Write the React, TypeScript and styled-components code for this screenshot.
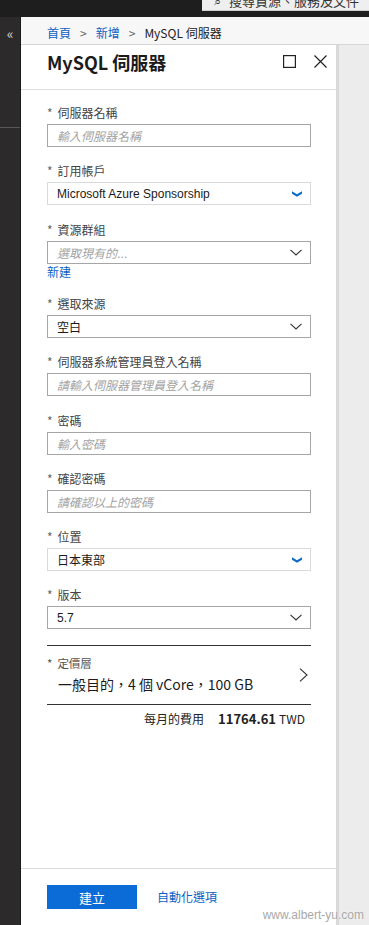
import React from 'react'
import styled, { createGlobalStyle } from 'styled-components'

const GlobalStyle = createGlobalStyle`
  html, body {
    margin: 0;
    padding: 0;
    background: #1e1e1e;
  }
  body {
    font-family: 'Noto Sans CJK TC', 'Liberation Sans', sans-serif;
    color: #222;
  }
`

const Page = styled.div`
  position: relative;
  width: 369px;
  height: 925px;
  display: flex;
  flex-direction: column;
  overflow: hidden;
`

const TopBar = styled.div`
  height: 17px;
  flex: 0 0 17px;
  background: #1e1e1e;
  display: flex;
  justify-content: flex-end;
  align-items: flex-start;
`

const SearchBox = styled.div`
  width: 155px;
  height: 10px;
  background: #efefef;
  border-bottom: 1px solid #cfcfcf;
  overflow: hidden;
  display: flex;
  gap: 8px;
  padding-left: 12px;
  font-size: 13px;
  line-height: 13px;
  color: #333;
  white-space: nowrap;
  span {
    margin-top: -6px;
  }
`

const Main = styled.div`
  flex: 1;
  display: flex;
  min-height: 0;
`

const SideNav = styled.div`
  width: 21px;
  flex: 0 0 21px;
  background: #2c2a2a;
  border-right: 1px solid #1a1a1a;
  box-sizing: border-box;
  display: flex;
  flex-direction: column;
`

const Collapse = styled.div`
  height: 30px;
  display: flex;
  align-items: center;
  justify-content: center;
  color: #d8d8d8;
  font-size: 14px;
  line-height: 14px;
  padding-top: 1px;
`

const NavRule = styled.div`
  margin-top: 79px;
  height: 1px;
  background: #595757;
`

const Workspace = styled.div`
  flex: 1;
  display: flex;
  flex-direction: column;
  min-width: 0;
`

const Breadcrumb = styled.div`
  height: 28px;
  flex: 0 0 28px;
  box-sizing: border-box;
  background: #f7f7f7;
  border-bottom: 1px solid #d6d6d6;
  padding: 0 0 3px 26px;
  display: flex;
  align-items: flex-end;
  gap: 9px;
  font-size: 12px;
  line-height: 16px;
`

const Crumb = styled.span<{ $link?: boolean }>`
  color: ${({ $link }) => ($link ? '#0b62c4' : '#222')};
`

const Sep = styled.span`
  color: #666;
  font-size: 12px;
`

const BladeArea = styled.div`
  flex: 1;
  display: flex;
  background: #ececec;
  min-height: 0;
`

const Blade = styled.div`
  width: 315px;
  flex: 0 0 315px;
  background: #fff;
  display: flex;
  flex-direction: column;
`

const Gutter = styled.div`
  width: 3px;
  background: #d9d9d9;
`

const BladeHeader = styled.div`
  height: 45px;
  flex: 0 0 45px;
  box-sizing: border-box;
  border-bottom: 1px solid #dedede;
  padding: 5px 9px 0 26px;
  display: flex;
  align-items: flex-start;
`

const Title = styled.h1`
  flex: 1;
  margin: 0;
  font-size: 18px;
  line-height: 24px;
  font-weight: 700;
  color: #1b1b1b;
`

const HeaderIcons = styled.div`
  display: flex;
  gap: 18px;
  padding-top: 5px;
`

const Body = styled.div`
  flex: 1;
  padding: 14px 25px 0 26px;
  display: flex;
  flex-direction: column;
`

const Field = styled.div<{ $tight?: boolean }>`
  display: flex;
  flex-direction: column;
  margin-bottom: ${({ $tight }) => ($tight ? '0' : '15.25px')};
`

const Label = styled.label`
  font-size: 12px;
  line-height: 17px;
  color: #444;
  margin-bottom: 3px;
  b {
    font-weight: 400;
    color: #666;
    margin-right: 5px;
  }
`

const TextInput = styled.input`
  height: 23px;
  box-sizing: border-box;
  border: 1px solid #a6a6a6;
  border-radius: 0;
  padding: 0 9px;
  font-family: inherit;
  font-size: 12px;
  color: #222;
  outline: none;
  &::placeholder {
    color: #a3a3a3;
    font-style: italic;
  }
`

const Select = styled.div<{ $light?: boolean }>`
  height: 23px;
  box-sizing: border-box;
  border: 1px solid ${({ $light }) => ($light ? '#dadada' : '#a6a6a6')};
  padding: 0 8px 0 9px;
  display: flex;
  align-items: center;
  justify-content: space-between;
  font-family: 'Liberation Sans', 'Noto Sans CJK TC', sans-serif;
  font-size: 12px;
  color: #1b1b1b;
`

const Placeholder = styled.span`
  font-family: 'Noto Sans CJK TC', sans-serif;
  color: #a3a3a3;
  font-style: italic;
  font-size: 12px;
`

const NewLink = styled.a`
  color: #0b62c4;
  font-size: 12px;
  line-height: 16px;
  margin-bottom: 15.5px;
  text-decoration: none;
  cursor: pointer;
`

const Divider = styled.div`
  height: 1px;
  background: #333;
`

const Pricing = styled.div`
  padding: 10px 3px 10px 0;
  display: flex;
  align-items: center;
`

const PricingText = styled.div`
  flex: 1;
  display: flex;
  flex-direction: column;
  gap: 4px;
`

const SmallLabel = styled.div`
  font-size: 11.5px;
  line-height: 14px;
  color: #555;
  b {
    font-weight: 400;
    margin-right: 5px;
  }
`

const PricingValue = styled.div`
  margin-left: 11px;
  font-size: 14px;
  line-height: 20px;
  color: #1b1b1b;
`

const CostRow = styled.div`
  padding: 6px 6px 0 0;
  display: flex;
  justify-content: flex-end;
  align-items: baseline;
  font-size: 12px;
  line-height: 16px;
  color: #222;
`

const CostAmount = styled.strong`
  margin-left: 14px;
  margin-right: 3px;
  font-size: 13px;
  font-weight: 700;
`

const Footer = styled.div`
  height: 57px;
  flex: 0 0 57px;
  box-sizing: border-box;
  border-top: 1px solid #dcdcdc;
  padding: 16px 0 0 26px;
  display: flex;
  align-items: flex-start;
  gap: 20px;
`

const PrimaryButton = styled.button`
  width: 90px;
  height: 24px;
  border: none;
  background: #0b6cd8;
  color: #fff;
  font-family: inherit;
  font-size: 13px;
  cursor: pointer;
`

const FooterLink = styled.a`
  color: #0b62c4;
  font-size: 12px;
  line-height: 24px;
  text-decoration: none;
`

const Watermark = styled.div`
  position: absolute;
  right: 5px;
  bottom: 3px;
  font-family: 'Liberation Sans', sans-serif;
  font-size: 12px;
  color: #a9a9a9;
  text-shadow: 0 0 2px #fff;
`

const ChevronDown = ({ blue }: { blue?: boolean }) =>
  blue ? (
    <svg width="10" height="6" viewBox="0 0 10 6">
      <path d="M0 0.3 L5 3.3 L10 0.3 L10 2.8 L5 5.8 L0 2.8 Z" fill="#0b6cc7" />
    </svg>
  ) : (
    <svg width="12" height="7" viewBox="0 0 12 7">
      <path d="M0.5 0.8 L6 6 L11.5 0.8" fill="none" stroke="#333" strokeWidth="1.1" />
    </svg>
  )

const ChevronRight = () => (
  <svg width="9" height="14" viewBox="0 0 9 14">
    <path d="M1 0.6 L8 7 L1 13.4" fill="none" stroke="#333" strokeWidth="1.1" />
  </svg>
)

const MaximizeIcon = () => (
  <svg width="13" height="13" viewBox="0 0 13 13">
    <rect x="0.6" y="0.6" width="11.8" height="11.8" fill="none" stroke="#222" strokeWidth="1.2" />
  </svg>
)

const CloseIcon = () => (
  <svg width="13" height="13" viewBox="0 0 13 13">
    <path d="M0.5 0.5 L12.5 12.5 M12.5 0.5 L0.5 12.5" stroke="#222" strokeWidth="1.2" />
  </svg>
)

const textFields = {
  serverName: { label: '伺服器名稱', placeholder: '輸入伺服器名稱' },
  admin: { label: '伺服器系統管理員登入名稱', placeholder: '請輸入伺服器管理員登入名稱' },
  password: { label: '密碼', placeholder: '輸入密碼' },
  confirm: { label: '確認密碼', placeholder: '請確認以上的密碼' },
}

const Req = ({ children }: { children: React.ReactNode }) => (
  <Label>
    <b>*</b>
    {children}
  </Label>
)

const InputField = ({ label, placeholder }: { label: string; placeholder: string }) => (
  <Field>
    <Req>{label}</Req>
    <TextInput readOnly placeholder={placeholder} />
  </Field>
)

const App = () => {
  return (
    <Page>
      <GlobalStyle />
      <TopBar>
        <SearchBox>
          <span>⌕</span>
          <span>搜尋資源、服務及文件</span>
        </SearchBox>
      </TopBar>
      <Main>
        <SideNav>
          <Collapse>«</Collapse>
          <NavRule />
        </SideNav>
        <Workspace>
          <Breadcrumb>
            <Crumb $link>首頁</Crumb>
            <Sep>&gt;</Sep>
            <Crumb $link>新增</Crumb>
            <Sep>&gt;</Sep>
            <Crumb>MySQL 伺服器</Crumb>
          </Breadcrumb>
          <BladeArea>
            <Blade>
              <BladeHeader>
                <Title>MySQL 伺服器</Title>
                <HeaderIcons>
                  <MaximizeIcon />
                  <CloseIcon />
                </HeaderIcons>
              </BladeHeader>
              <Body>
                <InputField {...textFields.serverName} />
                <Field>
                  <Req>訂用帳戶</Req>
                  <Select $light>
                    <span>Microsoft Azure Sponsorship</span>
                    <ChevronDown blue />
                  </Select>
                </Field>
                <Field $tight>
                  <Req>資源群組</Req>
                  <Select>
                    <Placeholder>選取現有的...</Placeholder>
                    <ChevronDown />
                  </Select>
                </Field>
                <NewLink>新建</NewLink>
                <Field>
                  <Req>選取來源</Req>
                  <Select>
                    <span>空白</span>
                    <ChevronDown />
                  </Select>
                </Field>
                <InputField {...textFields.admin} />
                <InputField {...textFields.password} />
                <InputField {...textFields.confirm} />
                <Field>
                  <Req>位置</Req>
                  <Select $light>
                    <span>日本東部</span>
                    <ChevronDown blue />
                  </Select>
                </Field>
                <Field>
                  <Req>版本</Req>
                  <Select>
                    <span>5.7</span>
                    <ChevronDown />
                  </Select>
                </Field>
                <Divider />
                <Pricing>
                  <PricingText>
                    <SmallLabel>
                      <b>*</b>定價層
                    </SmallLabel>
                    <PricingValue>一般目的，4 個 vCore，100 GB</PricingValue>
                  </PricingText>
                  <ChevronRight />
                </Pricing>
                <Divider />
                <CostRow>
                  每月的費用
                  <CostAmount>11764.61</CostAmount>
                  TWD
                </CostRow>
              </Body>
              <Footer>
                <PrimaryButton>建立</PrimaryButton>
                <FooterLink>自動化選項</FooterLink>
              </Footer>
            </Blade>
            <Gutter />
          </BladeArea>
        </Workspace>
      </Main>
      <Watermark>www.albert-yu.com</Watermark>
    </Page>
  )
}

export default App
